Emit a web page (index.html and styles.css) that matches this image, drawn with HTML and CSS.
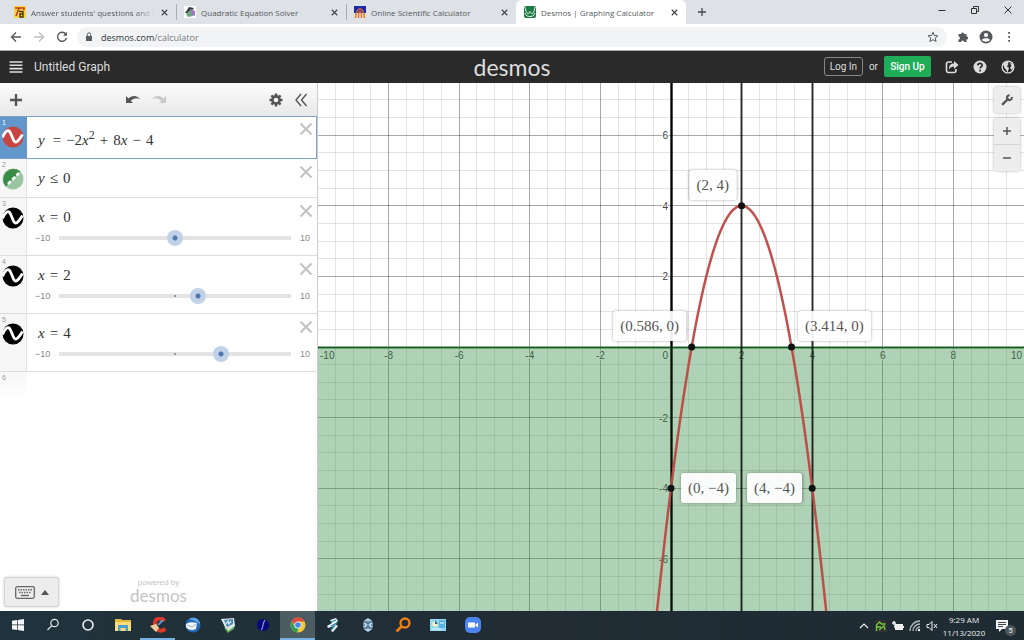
FILE: index.html
```html
<!DOCTYPE html>
<html lang="en">
<head>
<meta charset="utf-8">
<title>Desmos | Graphing Calculator</title>
<link rel="stylesheet" href="styles.css">
</head>
<body>
<svg class="defs" aria-hidden="true">
  <symbol id="close" viewBox="0 0 14 14"><path d="M1.500 1.500 12.500 12.500M12.500 1.500 1.500 12.500" fill="none" stroke="currentColor" stroke-width="2.200"/></symbol>
  <symbol id="wave" viewBox="0 0 22 22"><circle cx="11" cy="11" r="10.500" fill="currentColor"/><path d="M0.500 11.500C3 5 6.500 2.500 8.500 7L11.500 14C13.500 18.500 16.500 15 20.500 8.500" fill="none" stroke="#fff" stroke-width="2.800"/></symbol>
</svg>
<div class="screen">
  <nav class="tabs" aria-label="Browser tabs">
    <div class="tab">
      <svg class="favicon" viewBox="0 0 12 12"><path fill="#f7d53c" d="M0 0h12v12H0z"/><path d="M1 2h9v2M5 2.500 2 10" fill="none" stroke="#c33b26" stroke-width="1.600"/><path d="M5 5.500h4v5.500H6V8h3" fill="none" stroke="#4a3527" stroke-width="1.400"/></svg>
      <span class="tab-title fade">Answer students' questions and b</span>
      <button class="tab-close" aria-label="Close tab"><svg viewBox="0 0 14 14"><use href="#close"/></svg></button>
    </div>
    <div class="tab divided">
      <svg class="favicon" viewBox="0 0 12 12"><path fill="#fff" d="M0 0h12v12H0z"/><path fill="#353c46" d="M1 7 5 1l5 1-4 5z"/><path fill="#6da482" d="m2 8 5-5 2 7-5 1z"/><path fill="#9878ba" d="m7 3 4 2v5L8 9z"/></svg>
      <span class="tab-title">Quadratic Equation Solver</span>
      <button class="tab-close" aria-label="Close tab"><svg viewBox="0 0 14 14"><use href="#close"/></svg></button>
    </div>
    <div class="tab divided">
      <svg class="favicon" viewBox="0 0 12 12"><path fill="#1c2aa8" d="M0 0h12v7H0z"/><path fill="#f4e7c6" d="M0 7h12v5H0z"/><path d="M1.500 12C2.500 0 9.500 0 10.500 12M4.500 12C4.500 3 7.500 3 7.500 12" fill="none" stroke="#dd6a38" stroke-width="1.400"/></svg>
      <span class="tab-title">Online Scientific Calculator</span>
      <button class="tab-close" aria-label="Close tab"><svg viewBox="0 0 14 14"><use href="#close"/></svg></button>
    </div>
    <div class="tab active">
      <svg class="favicon" viewBox="0 0 12 12"><rect width="12" height="12" rx="2" fill="#1f7a45"/><path d="M1 1C2 7 4 9 5 7 6 5 6 5 7 7 8 9 10 7 11 1M1 7c1 3 3 3.500 5 3.500S10 10 11 7" fill="none" stroke="#e4f3e9" stroke-width="1"/></svg>
      <span class="tab-title">Desmos | Graphing Calculator</span>
      <button class="tab-close" aria-label="Close tab"><svg viewBox="0 0 14 14"><use href="#close"/></svg></button>
    </div>
    <button class="new-tab" aria-label="New tab"><svg viewBox="0 0 10 10"><path d="M5 1v8M1 5h8" stroke="#45494d" stroke-width="1.300"/></svg></button>
    <div class="window-controls">
      <button aria-label="Minimize"><svg viewBox="0 0 10 10"><path d="M1.500 5.500h7" stroke="#333"/></svg></button>
      <button aria-label="Restore"><svg viewBox="0 0 10 10"><path d="M1.500 3.500h5v5h-5zM3.500 3V1.500h5v5H7" fill="none" stroke="#333"/></svg></button>
      <button aria-label="Close"><svg viewBox="0 0 10 10"><path d="m1.500 1.500 7 7m0-7-7 7" stroke="#333"/></svg></button>
    </div>
  </nav>

  <div class="address-bar">
    <button aria-label="Back"><svg viewBox="0 0 12 12"><path d="M11 6H2M6 1.500 1.500 6 6 10.500" fill="none" stroke="#55595d" stroke-width="1.400"/></svg></button>
    <button aria-label="Forward"><svg viewBox="0 0 12 12"><path d="M1 6h9M6 1.500 10.500 6 6 10.500" fill="none" stroke="#bcbfc2" stroke-width="1.400"/></svg></button>
    <button aria-label="Reload"><svg viewBox="0 0 12 12"><path d="M9.800 3.200A4.500 4.500 0 1 0 10.500 6.800" fill="none" stroke="#55595d" stroke-width="1.400"/><path d="M11 .8v4H7z" fill="#55595d"/></svg></button>
    <div class="url">
      <svg class="lock" viewBox="0 0 8 10"><path fill="#5a5e62" d="M1 4h6v5H1z"/><path d="M2.300 4V2.500a1.700 1.700 0 0 1 3.400 0V4" fill="none" stroke="#5a5e62"/></svg>
      <span class="address">desmos.com<span class="path">/calculator</span></span>
      <svg class="star" viewBox="0 0 12 12"><path d="m6 1.300 1.400 3.200 3.500.3-2.700 2.300.9 3.400L6 8.700l-3.100 1.800.9-3.400-2.700-2.300 3.500-.3z" fill="none" stroke="#55595d"/></svg>
    </div>
    <button aria-label="Extensions"><svg viewBox="0 0 12 12"><path fill="#55595d" d="M1.500 3h2.500a1.600 1.600 0 1 1 3.200 0H9.500v2.300a1.600 1.600 0 1 1 0 3.200V11H7.200a1.500 1.500 0 0 0-3 0H1.500V8.500a1.500 1.500 0 0 0 0-3z"/></svg></button>
    <button aria-label="Profile"><svg class="big" viewBox="0 0 14 14"><circle cx="7" cy="7" r="6.500" fill="#55595d"/><circle cx="7" cy="5" r="2.100" fill="#fff"/><path fill="#fff" d="M3 10c1-2.500 7-2.500 8 0-2 2.200-6 2.200-8 0z"/></svg></button>
    <button aria-label="Menu"><svg viewBox="0 0 12 12"><path d="M5.200 1h1.800v1.800H5.200zm0 4h1.800v1.800H5.200zm0 4h1.800v1.800H5.200z" fill="#55595d"/></svg></button>
  </div>

  <header class="header">
    <div class="header-left">
      <button aria-label="Open graph list"><svg viewBox="0 0 14 14"><path d="M.5 2h13M.5 5.300h13M.5 8.600h13M.5 12h13" stroke="#ddd" stroke-width="1.600"/></svg></button>
      <h1 class="graph-title">Untitled Graph</h1>
    </div>
    <div class="logo">desmos</div>
    <div class="header-right">
      <button class="login">Log In</button><span>or</span><button class="signup">Sign Up</button>
      <button class="round" aria-label="Share"><svg viewBox="0 0 14 14"><path d="M7 2H3.500Q1.500 2 1.500 4v6.500q0 2 2 2H9q2 0 2-2V9" fill="none" stroke="#ddd" stroke-width="1.600"/><path d="M4 9.500C4 5 6 3.500 9 3.500V1l4.500 4L9 9V6.500C7 6.500 5 7.500 4 9.500z" fill="#ddd"/></svg></button>
      <button class="round" aria-label="Help"><svg viewBox="0 0 14 14"><circle cx="7" cy="7" r="6.500" fill="#ddd"/><path d="M4.800 5.400C4.900 2.700 9.200 2.800 9.200 5.200 9.200 6.700 7.200 6.700 7.200 8.500M7.200 9.700v1.700" fill="none" stroke="#2a2a2a" stroke-width="1.700"/></svg></button>
      <button class="round" aria-label="Language"><svg viewBox="0 0 14 14"><circle cx="7" cy="7" r="5.900" fill="none" stroke="#ddd" stroke-width="1.300"/><path fill="#ddd" d="M2 4 6 1.500l2 1.200L6.500 4l1 1.200-2 .8L8 8 6.500 12.500 5 9.500 3.500 8zM9 3l3 1 .8 3.500L10.500 10 9 7.500 10.500 6z"/></svg></button>
    </div>
  </header>

  <main class="calculator">
    <section class="panel" aria-label="Expressions">
      <div class="panel-bar">
        <button aria-label="Add item"><svg viewBox="0 0 14 14"><path d="M7 1v12M1 7h12" stroke="#555" stroke-width="2.400"/></svg></button>
        <div class="history">
          <button aria-label="Undo"><svg viewBox="0 0 16 12"><path fill="#555" d="M1 2v7h7L5.800 7C8 4.500 11 3.500 15 5 11.500.8 6.500 1.200 3.500 4.600z"/></svg></button>
          <button aria-label="Redo"><svg viewBox="0 0 16 12"><path fill="#c8c8c8" d="M15 2v7H8l2.200-2C8 4.500 5 3.500 1 5 4.500.8 9.500 1.200 12.500 4.600z"/></svg></button>
        </div>
        <div class="panel-tools">
          <button aria-label="Edit list"><svg viewBox="0 0 14 14"><circle cx="7" cy="7" r="3.600" fill="none" stroke="#555" stroke-width="2.600"/><path d="M7 .5v2.500M7 11v2.500M.5 7H3M11 7h2.500M2.400 2.400l1.700 1.700M9.900 9.900l1.700 1.700M2.400 11.600l1.700-1.700M9.900 4.100l1.700-1.700" stroke="#555" stroke-width="2.400"/></svg></button>
          <button aria-label="Hide list"><svg viewBox="0 0 14 14"><path d="M7 1 2 7l5 6M12.500 1l-5 6 5 6" fill="none" stroke="#555" stroke-width="1.400"/></svg></button>
        </div>
      </div>
      <ol class="rows">
        <li class="row first selected">
          <div class="gutter"><span>1</span><svg class="red" viewBox="0 0 22 22"><use href="#wave"/></svg></div>
          <div class="content"><div class="math"><i class="lead">y</i><b>=</b>−2<i>x</i><sup>2</sup><b>+</b>8<i>x</i><b>−</b>4</div></div>
          <button class="delete" aria-label="Delete expression 1"><svg viewBox="0 0 14 14"><use href="#close"/></svg></button>
        </li>
        <li class="row">
          <div class="gutter"><span>2</span><svg viewBox="0 0 22 22"><circle cx="11" cy="11" r="10.500" fill="#9cc5a3"/><path d="M3.600 18.400A10.500 10.500 0 0 1 18.400 3.600z" fill="#388c46"/><path d="M6 16 17 5" stroke="#fff" stroke-width="2.600" stroke-dasharray="4 2"/></svg></div>
          <div class="content"><div class="math"><i>y</i><b>≤</b>0</div></div>
          <button class="delete" aria-label="Delete expression 2"><svg viewBox="0 0 14 14"><use href="#close"/></svg></button>
        </li>
        <li class="row slider-row">
          <div class="gutter"><span>3</span><svg viewBox="0 0 22 22"><use href="#wave"/></svg></div>
          <div class="content"><div class="math"><i>x</i><b>=</b>0</div>
            <div class="slider"><span>−10</span><input type="range" aria-label="x, first line" min="-10" max="10" value="0"><span>10</span></div></div>
          <button class="delete" aria-label="Delete expression 3"><svg viewBox="0 0 14 14"><use href="#close"/></svg></button>
        </li>
        <li class="row slider-row">
          <div class="gutter"><span>4</span><svg viewBox="0 0 22 22"><use href="#wave"/></svg></div>
          <div class="content"><div class="math"><i>x</i><b>=</b>2</div>
            <div class="slider"><span>−10</span><input type="range" aria-label="x, second line" min="-10" max="10" value="2"><span>10</span></div></div>
          <button class="delete" aria-label="Delete expression 4"><svg viewBox="0 0 14 14"><use href="#close"/></svg></button>
        </li>
        <li class="row slider-row">
          <div class="gutter"><span>5</span><svg viewBox="0 0 22 22"><use href="#wave"/></svg></div>
          <div class="content"><div class="math"><i>x</i><b>=</b>4</div>
            <div class="slider"><span>−10</span><input type="range" aria-label="x, third line" min="-10" max="10" value="4"><span>10</span></div></div>
          <button class="delete" aria-label="Delete expression 5"><svg viewBox="0 0 14 14"><use href="#close"/></svg></button>
        </li>
        <li class="row empty"><div class="gutter"><span>6</span></div></li>
      </ol>
      <footer class="panel-foot">
        <button class="keypad" aria-label="Show keypad">
          <svg class="keys" viewBox="0 0 20 13"><rect x=".7" y=".7" width="18.600" height="11.600" rx="1.500" fill="none" stroke="#666" stroke-width="1.300"/><path d="M3 3.700h14M4 6.500h12" stroke="#666" stroke-width="1.400" stroke-dasharray="1.500 1"/><path d="M6 9.500h8" stroke="#666" stroke-width="1.400"/></svg>
          <svg class="caret" viewBox="0 0 8 5"><path fill="#555" d="m0 5 4-5 4 5z"/></svg>
        </button>
        <div class="powered"><span>powered by</span><strong>desmos</strong></div>
      </footer>
    </section>
    <section class="graph" id="graph" aria-label="Graph">
      <svg class="plot" id="plot"></svg>
      <div class="point-label above-left" data-x="2" data-y="4">(2, 4)</div>
      <div class="point-label above-left" data-x="0.586" data-y="0">(0.586, 0)</div>
      <div class="point-label above-right" data-x="3.414" data-y="0">(3.414, 0)</div>
      <div class="point-label right" data-x="0" data-y="-4">(0, −4)</div>
      <div class="point-label left" data-x="4" data-y="-4">(4, −4)</div>
      <div class="graph-tools">
        <button aria-label="Graph settings"><svg viewBox="0 0 12 12"><path d="M1.800 10.200 7 5" stroke="#555" stroke-width="2.400" stroke-linecap="round"/><path d="M10.700 3A2.500 2.500 0 1 1 8.600 1.300" fill="none" stroke="#555" stroke-width="2"/></svg></button>
        <div class="zoom">
          <button aria-label="Zoom in"><svg viewBox="0 0 12 12"><path d="M6 2v8M2 6h8" stroke="#555" stroke-width="1.500"/></svg></button>
          <button aria-label="Zoom out"><svg viewBox="0 0 12 12"><path d="M2 6h8" stroke="#555" stroke-width="1.500"/></svg></button>
        </div>
      </div>
    </section>
  </main>

  <div class="taskbar">
    <div class="apps">
      <button aria-label="Start"><svg viewBox="0 0 16 16"><path fill="#f2f4f5" d="m2 3.700 5-.7v4.600H2zM7.700 2.900 14 2v5.600H7.700zM2 8.300h5V13l-5-.7zM7.700 8.300H14V14l-6.300-.9z"/></svg></button>
      <button aria-label="Search"><svg viewBox="0 0 16 16"><circle cx="9.500" cy="6" r="3.700" fill="none" stroke="#e6e9ea" stroke-width="1.200"/><path d="M6.800 8.700 2.500 13" stroke="#e6e9ea" stroke-width="1.200"/></svg></button>
      <button aria-label="Cortana"><svg viewBox="0 0 16 16"><circle cx="8" cy="8" r="5" fill="none" stroke="#eee" stroke-width="1.600"/></svg></button>
      <button aria-label="File Explorer"><svg viewBox="0 0 16 16"><path fill="#e8b83a" d="M0 2h6l1 1h9v11H0z"/><path fill="#fadc78" d="M0 5h16v9H0z"/><path fill="#4b9fd4" d="M3 8h10v6h-2.500v-3h-5v3H3z"/></svg></button>
      <button class="running" aria-label="CCleaner"><svg viewBox="0 0 16 16"><path d="M14.500 4C10-1 4 2 5 8c1 6 6 7 10.500 4" fill="none" stroke="#d8392b" stroke-width="4"/><path d="m13 3-5 5" stroke="#5a9acb" stroke-width="2"/><path fill="#f1cf9d" d="m0 9 6-2 3 4-3 4z"/></svg></button>
      <button aria-label="Thunderbird"><svg viewBox="0 0 16 16"><circle cx="8" cy="8" r="7.500" fill="#2368b5"/><path fill="#5ba7ea" d="M4 2c5-3 11 0 11 5L10 4z"/><path fill="#f2f5f8" d="M1 7c3-2 7-2 11-1l-1 6c-4 2-8 1-10-2z"/><path d="m2 8 5 2 4-3" fill="none" stroke="#9eb2c9"/></svg></button>
      <button aria-label="Map tool"><svg viewBox="0 0 16 16"><path fill="#58a84f" d="m4 11 11-3-1 4-6 4z"/><path fill="#dde4e8" d="m1 2 13-1 1 8-7 5z"/><path fill="#468bb5" d="m4 3 9-1v5l-6 3z"/><path d="m6 7 2-3 1 3 2-3M2 2l4 9" fill="none" stroke="#e5edf0" stroke-width="1.200"/></svg></button>
      <button aria-label="Geometry"><svg viewBox="0 0 16 16"><circle cx="8" cy="8" r="6" fill="#08087c"/><path d="M6 13c3-2 1-7 4-10" fill="none" stroke="#8990ce" stroke-width="1.200"/></svg></button>
      <button class="running current" aria-label="Chrome"><svg viewBox="0 0 16 16"><circle cx="8" cy="8" r="7.500" fill="#f6c934"/><path fill="#dd4b3e" d="M1.500 4.200A7.500 7.500 0 0 1 14.500 4.500H8v7z"/><path fill="#31a05a" d="M1.500 4.200 5 10l3.500 1.500-1.500 4A7.500 7.500 0 0 1 1.500 4.200z"/><circle cx="8" cy="8" r="3.500" fill="#fff"/><circle cx="8" cy="8" r="2.800" fill="#4788ea"/></svg></button>
      <button aria-label="Converter"><svg viewBox="0 0 16 16"><path fill="#e9f2f6" d="m5 3 6-2 2 3-3 3 3 2-5 6-2-1 3-5-6 2-1-2 5-3z"/><path d="m6 5 5-2M6 9l6-3M6 13l4-5" fill="none" stroke="#2889b4" stroke-width="1.300"/></svg></button>
      <button aria-label="Globe tool"><svg viewBox="0 0 16 16"><path fill="#b4d5e8" d="m8 1 3 2 1 1 1 4-1 4-1 1-3 2-3-2-1-1-1-4 1-4 1-1z"/><path d="M4 5h3M9 5h3M4 11h3M9 11h3M3 8h2M11 8h2M7 4v3h2V4M7 12V9h2v3" fill="none" stroke="#31536e"/></svg></button>
      <button aria-label="Everything"><svg viewBox="0 0 16 16"><circle cx="10" cy="6" r="4.500" fill="none" stroke="#f08015" stroke-width="2.300"/><path d="m6.500 9.500-5 5" stroke="#f08015" stroke-width="2.600"/></svg></button>
      <button aria-label="Control panel"><svg viewBox="0 0 16 16"><path fill="#93d9f2" d="M0 2h16v12H0z"/><path fill="#56b6df" d="M9 3h6v8H9z"/><circle cx="5" cy="7" r="2.800" fill="#f4efbe"/><path fill="#31658a" d="M5 3v4h3z"/><path d="M2 12h9M10 6h4" stroke="#e8fbff"/></svg></button>
      <button aria-label="Zoom"><svg viewBox="0 0 16 16"><rect width="16" height="16" rx="5" fill="#4a86ee"/><path fill="#fff" d="M3 5.500h7v5H3zM10.500 7.500 13 5.500v5l-2.500-2z"/></svg></button>
    </div>
    <div class="tray">
      <svg viewBox="0 0 12 12"><path d="M2 8l4-4 4 4" fill="none" stroke="#eee" stroke-width="1.200"/></svg>
      <svg viewBox="0 0 12 12"><path fill="#302f32" d="M0 0h12v12H0z"/><path d="M1.500 11V5l3-3 2 2h4M4 10l5-4 1 4M2 7h4" fill="none" stroke="#76c83d" stroke-width="1.300"/></svg>
      <svg viewBox="0 0 12 12"><path fill="#eee" d="M3 4h8v6H3zM11 6h1v2h-1z"/><path d="M2 1v4M0 3h4M3 5v3" stroke="#eee" stroke-width="1.500"/></svg>
      <svg viewBox="0 0 12 12"><path d="M1 11A10 10 0 0 1 11 1M4 11a7 7 0 0 1 7-7M7 11a4 4 0 0 1 4-4" fill="none" stroke="#aeb7bb" stroke-width="1.300"/><circle cx="10" cy="10" r="1.200" fill="#eee"/></svg>
      <svg viewBox="0 0 12 12"><path d="M1 4.500h2l3-3v9l-3-3H1zM8 4l3 4m0-4L8 8" fill="none" stroke="#eee"/></svg>
      <div class="clock"><time>9:29 AM</time><time>11/13/2020</time></div>
      <button class="notice" aria-label="Notifications"><svg viewBox="0 0 12 12"><path fill="#f3f3f3" d="M0 0h12v9H6l-3 3V9H0z"/><path d="M2 2.500h8M2 4.500h8M2 6.500h5" stroke="#27343b" stroke-width=".9"/></svg><span>5</span></button>
    </div>
  </div>
</div>
<script src="graph.js"></script>
</body>
</html>
```
FILE: graph.js
```js
// Draws the coordinate plane, the shaded half-plane, the lines and the parabola.
const graph = document.getElementById('graph');
const plot = document.getElementById('plot');

function draw() {
  const w = graph.clientWidth;
  const h = graph.clientHeight;
  const unit = w / 20;
  const px = x => w / 2 + x * unit;
  const py = y => h / 2 - y * unit;
  const snap = v => Math.floor(v) + 0.5;
  const out = [];
  const vertical = (x, cls) => `<path class="${cls}" d="M${snap(px(x))} 0V${h}"/>`;
  const horizontal = (y, cls) => `<path class="${cls}" d="M0 ${snap(py(y))}H${w}"/>`;

  for (let i = -19; i < 20; i++) out.push(vertical(i / 2, i % 4 ? 'minor' : 'major'));
  const rows = Math.ceil(h / unit);
  for (let i = -rows; i <= rows; i++) out.push(horizontal(i / 2, i % 4 ? 'minor' : 'major'));
  out.push(vertical(0, 'axis'));

  const text = (x, y, anchor, value) =>
    `<text class="tick" x="${x}" y="${y}" text-anchor="${anchor}">${value}</text>`;
  for (let n = -8; n <= 8; n += 2) if (n) out.push(text(px(n), py(0) + 12, 'middle', n));
  out.push(text(2, py(0) + 12, 'start', -10));
  out.push(text(w - 2, py(0) + 12, 'end', 10));
  out.push(text(px(0) - 3, py(0) + 12, 'end', 0));
  for (let n = -6; n <= 6; n += 2) if (n) out.push(text(px(0) - 3, py(n) + 4, 'end', n));

  out.push(`<rect class="shade" x="0" y="${py(0)}" width="${w}" height="${h / 2}"/>`);
  out.push(`<path class="boundary" d="M0 ${snap(py(0))}H${w}"/>`);
  out.push(horizontal(0, 'x-axis'));
  out.push(vertical(0, 'line'), vertical(2, 'line'), vertical(4, 'line'));

  let d = '';
  for (let x = -1; x <= 5; x += 0.05) d += `${d ? 'L' : 'M'}${px(x)} ${py(-2 * x * x + 8 * x - 4)}`;
  out.push(`<path class="curve" d="${d}"/>`);

  document.querySelectorAll('.point-label').forEach(label => {
    const x = px(Number(label.dataset.x));
    const y = py(Number(label.dataset.y));
    out.push(`<circle class="point" cx="${x}" cy="${y}" r="3.5"/>`);
    label.style.left = `${Math.round(x)}px`;
    label.style.top = `${Math.round(y)}px`;
  });
  plot.innerHTML = out.join('');
}

draw();
window.addEventListener('resize', draw);
```
FILE: styles.css
```css
* { box-sizing: border-box; }
body { margin: 0; font-family: "Liberation Sans", Arial, sans-serif; color: #444; }
button { border: 0; padding: 0; margin: 0; background: none; font: inherit; color: inherit; display: flex; align-items: center; justify-content: center; }
svg { display: block; flex: none; }
.defs { position: absolute; width: 0; height: 0; }
.screen { height: 100vh; display: flex; flex-direction: column; overflow: hidden; }

/* Browser tabs */
.tabs { flex: none; height: 24px; display: flex; background: #dee1e6; font: 8px "Open Sans", "Noto Sans", sans-serif; padding-left: 6px; }
.tab { flex: 0 1 170px; min-width: 0; display: flex; align-items: center; gap: 5px; padding: 0 7px 0 8px; color: #55595e; }
.divided { border-left: 1px solid #a9acb1; border-image: linear-gradient(transparent 5px, #a9acb1 5px, #a9acb1 19px, transparent 19px) 1; padding-left: 7px; }
.active { background: #fff; border-radius: 6px 6px 0 0; }
.favicon { width: 12px; height: 12px; }
.tab-title { flex: 1; overflow: hidden; white-space: nowrap; }
.fade { mask-image: linear-gradient(90deg, #000 85%, transparent); }
.tab-close svg { width: 7px; height: 7px; color: #404347; }
.tab-close { width: 10px; height: 16px; }
.new-tab { width: 32px; }
.new-tab svg { width: 10px; height: 10px; }
.window-controls { margin-left: auto; display: flex; height: 20px; }
.window-controls button { width: 33px; }
.window-controls svg { width: 10px; height: 10px; }

/* Address bar */
.address-bar { flex: none; height: 27px; display: flex; align-items: center; background: #fff; border-bottom: 1px solid #aaa; padding: 0 4px; }
.address-bar > button { width: 23px; height: 24px; }
.address-bar svg { width: 12px; height: 12px; }
.address-bar .big { width: 14px; height: 14px; }
.url { flex: 1; height: 20px; margin: 0 4px 0 4px; padding: 0 8px; display: flex; align-items: center; gap: 8px; border-radius: 10px; background: #f1f3f4; font: 9px "Open Sans", "Noto Sans", sans-serif; }
.url .lock { width: 8px; height: 10px; }
.address { flex: 1; color: #303438; }
.path { color: #777b80; }

/* Calculator header */
.header { flex: none; height: 32px; display: grid; grid-template-columns: 1fr auto 1fr; align-items: center; background: #2a2a2a; color: #ddd; padding: 0 9px 1px; }
.header-left, .header-right { display: flex; align-items: center; }
.header-left { gap: 11px; }
.header-left svg { width: 14px; height: 14px; }
.graph-title { margin: 0; font: 400 12px Roboto, sans-serif; }
.logo { font: 23px Lato, sans-serif; line-height: 28px; }
.header-right { justify-content: flex-end; gap: 6px; font: 10px Roboto, sans-serif; }
.login { width: 39px; height: 19px; border: 1px solid #888; border-radius: 3px; }
.signup { width: 47px; height: 21px; border-radius: 2px; background: #1fad58; color: #fff; font-weight: 500; }
.round { margin-left: 8px; }
.round svg { width: 14px; height: 14px; }

/* Expression list */
.calculator { flex: 1; min-height: 0; display: flex; }
.panel { flex: none; width: 318px; display: flex; flex-direction: column; background: #fff; border-right: 1px solid #ccc; }
.panel-bar { flex: none; height: 33px; display: grid; grid-template-columns: 1fr auto 1fr; align-items: center; padding: 0 9px; background: linear-gradient(#fcfcfc, #e8e8e8); }
.panel-bar > button { justify-self: start; }
.panel-bar svg { width: 14px; height: 14px; }
.history, .panel-tools { display: flex; gap: 10px; }
.history .history svg, .history svg { width: 16px; height: 12px; }
.history { margin-right: 26px; }
.panel-tools { justify-self: end; gap: 11px; }
.rows { list-style: none; margin: 0; padding: 0; flex: 1; min-height: 0; }
.row { position: relative; display: flex; min-height: 39px; border-bottom: 1px solid #ddd; }
.first { min-height: 43px; }
.selected { border: 1px solid #7fa3c8; border-left: 0; }
.slider-row { min-height: 58px; }
.gutter { flex: none; width: 27px; padding: 2px 2px 0; background: #f6f6f6; border-right: 1px solid #e4e4e4; font-size: 7px; line-height: 7px; color: #999; }
.gutter svg { width: 22px; height: 22px; color: #000; }
.gutter span { display: block; }
.selected .gutter { background: #6297cc; border-color: #6297cc; color: #fff; }
.gutter .red { color: #c74440; }
.content { flex: 1; min-width: 0; display: flex; flex-direction: column; justify-content: center; padding: 0 7px 0 8px; }
.slider-row .content { justify-content: flex-start; padding-top: 10px; }
.math { padding-left: 3px; font: 15px/18px "Liberation Serif", "Times New Roman", serif; color: #333; white-space: nowrap; }
.math b { font-weight: 400; margin: 0 5px; }
.math .lead { margin-right: 3px; }
.math sup { font-size: 12px; line-height: 0; vertical-align: 6px; }
.selected .math { padding-top: 4px; }
.slider { display: flex; align-items: center; height: 16px; margin-top: 4px; font-size: 9px; color: #888; }
.slider span { flex: none; width: 16px; }
.slider span:last-child { width: 11px; text-align: right; }
.slider input { flex: 1; min-width: 0; height: 16px; margin: 0; appearance: none; background: radial-gradient(circle, #999 1px, transparent 1px), linear-gradient(#e3e3e3, #e3e3e3) center / calc(100% - 16px) 4px no-repeat; }
.slider input::-webkit-slider-thumb { appearance: none; width: 16px; height: 16px; border-radius: 50%; background: radial-gradient(circle, #4d78b2 2px, #c1d1e7 3px); }
.slider input::-moz-range-thumb { border: 0; width: 16px; height: 16px; border-radius: 50%; background: radial-gradient(circle, #4d78b2 2px, #c1d1e7 3px); }
.delete { position: absolute; top: 6px; right: 4px; color: #c4c4c4; }
.selected .delete { top: 5px; right: 3px; }
.delete svg { width: 14px; height: 14px; }
.empty { min-height: 28px; border: 0; }
.empty .gutter { background: linear-gradient(#f6f6f6, #fff); border: 0; }
.panel-foot { flex: none; display: grid; grid-template-columns: 1fr auto 1fr; align-items: center; padding: 0 4px 4px; }
.keypad { width: 55px; height: 30px; gap: 6px; border: 1px solid #d4d4d4; border-radius: 3px; background: #ededed; box-shadow: 0 0 3px #ccc; }
.keys { width: 20px; height: 13px; }
.caret { width: 8px; height: 5px; }
.powered { display: flex; flex-direction: column; align-items: center; color: #c4c4c4; font-size: 8px; line-height: 10px; }
.powered strong { font: 17px/20px Lato, sans-serif; margin-top: -5px; padding-top: 3px; }

/* Graph paper */
.graph { position: relative; flex: 1; min-width: 0; overflow: hidden; background: #fff; }
.plot { width: 100%; height: 100%; }
.plot path { fill: none; }
.minor { stroke: #000; stroke-opacity: .1; }
.major { stroke: #000; stroke-opacity: .34; }
.axis { stroke: #000; stroke-width: 2; }
.tick { font: 10px "Liberation Sans", Arial, sans-serif; fill: #444; stroke: #fff; stroke-width: 2px; paint-order: stroke; }
.shade { fill: #388c46; fill-opacity: .4; }
.boundary { stroke: #388c46; stroke-width: 3; stroke-opacity: .6; }
.x-axis { stroke: #20502a; }
.line { stroke: #000; stroke-width: 2; stroke-opacity: .75; }
.curve { stroke: #bd4843; stroke-width: 2.500; stroke-opacity: .95; }
.point { fill: #111; }
.point-label { position: absolute; padding: 6px 7px; border-radius: 3px; background: rgba(255, 255, 255, .93); box-shadow: 0 0 3px rgba(0, 0, 0, .35); font: 15px/18px "Liberation Serif", "Times New Roman", serif; color: #555; white-space: nowrap; }
.above-left { transform: translate(-100%, -100%); margin: -6px 0 0 -6px; }
.above-right { transform: translate(0, -100%); margin: -6px 0 0 6px; }
.right { transform: translate(0, -50%); margin-left: 10px; }
.left { transform: translate(-100%, -50%); margin-left: -10px; }
.graph-tools { position: absolute; top: 4px; right: 4px; display: flex; flex-direction: column; gap: 5px; }
.graph-tools svg { width: 12px; height: 12px; }
.graph-tools button { width: 26px; height: 26px; background: #ededed; }
.graph-tools > button, .zoom { border-radius: 3px; box-shadow: 0 0 3px #aaa; }
.zoom button + button { border-top: 1px solid #d5d5d5; height: 27px; }

/* Taskbar */
.taskbar { flex: none; height: 29px; display: flex; justify-content: space-between; background: linear-gradient(90deg, #20333c, #212c35 50%, #1f2c34); color: #eee; }
.apps { display: flex; }
.apps button { width: 35px; border-bottom: 2px solid transparent; }
.apps svg { width: 16px; height: 16px; }
.apps .running { border-color: #76b1e2; }
.apps .current { background: #4d5c63; }
.tray { display: flex; align-items: center; gap: 5px; padding-right: 8px; }
.tray svg { width: 12px; height: 12px; }
.clock { width: 42px; margin-right: 6px; display: flex; flex-direction: column; align-items: center; font: 8px/13px "Open Sans", "Noto Sans", sans-serif; }
.notice { position: relative; width: 20px; height: 20px; justify-content: flex-start; }
.notice span { position: absolute; right: 0; bottom: 0; width: 11px; height: 11px; border-radius: 50%; background: #4b5459; font: 8px/11px Roboto, sans-serif; text-align: center; }
```
